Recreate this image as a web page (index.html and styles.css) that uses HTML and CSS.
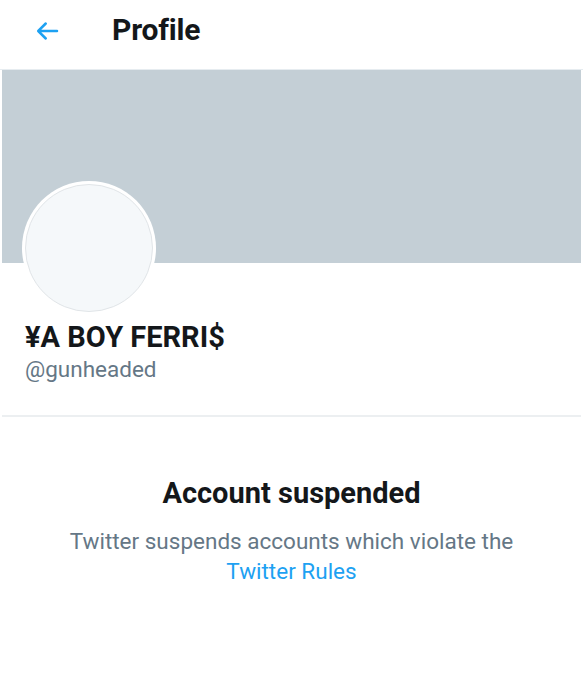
FILE: index.html
```html
<!DOCTYPE html>
<html>
<head>
<meta charset="utf-8">
<link rel="stylesheet" href="styles.css">
</head>
<body>
<div class="page">
  <header class="topbar">
    <svg class="back" viewBox="0 0 24 24" width="30" height="30"><path d="M20 11H7.414l4.293-4.293a1 1 0 0 0-1.414-1.414l-6 6a1 1 0 0 0 0 1.414l6 6a1 1 0 0 0 1.414-1.414L7.414 13H20a1 1 0 1 0 0-2z" fill="#1da1f2"/></svg>
    <h1 class="title">Profile</h1>
  </header>
  <div class="banner"></div>
  <div class="profile">
    <div class="avatar"><div class="avatar-inner"></div></div>
    <div class="name">¥A BOY FERRI$</div>
    <div class="handle">@gunheaded</div>
  </div>
  <div class="divider"></div>
  <section class="notice">
    <h2 class="notice-title">Account suspended</h2>
    <p class="notice-text">Twitter suspends accounts which violate the<br><a class="link">Twitter Rules</a></p>
  </section>
</div>
</body>
</html>
```
FILE: styles.css
```css
* { box-sizing: border-box; }
html, body { margin: 0; padding: 0; background: #fff; }
body { font-family: Roboto, "Noto Sans", Arial, sans-serif; color: #14171a; }
.page { width: 583px; }
.topbar {
  height: 70px;
  display: flex;
  align-items: center;
  padding: 0 0 10px 32px;
  border-bottom: 1px solid #e6ecf0;
}
.back { display: block; margin-top: 2px; }
.title {
  margin: 0 0 0 50px;
  font-size: 30px;
  font-weight: 700;
  letter-spacing: -0.2px;
  color: #14171a;
  line-height: 1;
}
.banner {
  height: 193px;
  margin: 0 2px;
  background: #c4cfd6;
}
.profile { padding: 0 24px 0 22px; }
.avatar {
  width: 134px;
  height: 134px;
  margin-top: -82px;
  border-radius: 50%;
  background: #fff;
  padding: 3px;
  position: relative;
}
.avatar-inner {
  width: 100%;
  height: 100%;
  border-radius: 50%;
  background: #f5f8fa;
  border: 1px solid #e1e5e8;
}
.name {
  margin: 5px 0 0 3px;
  font-size: 29px;
  font-weight: 700;
  line-height: 34px;
  color: #14171a;
}
.handle {
  margin: 1px 0 0 3px;
  font-size: 22.5px;
  line-height: 28px;
  color: #657786;
}
.divider {
  height: 2px;
  margin: 32px 2px 0;
  background: #eceff1;
}
.notice { text-align: center; padding-top: 59px; }
.notice-title {
  margin: 0;
  font-size: 29px;
  font-weight: 700;
  line-height: 34px;
  color: #14171a;
}
.notice-text {
  margin: 16px 0 0;
  font-size: 22.5px;
  line-height: 30px;
  color: #657786;
}
.link { color: #1da1f2; text-decoration: none; }
```
